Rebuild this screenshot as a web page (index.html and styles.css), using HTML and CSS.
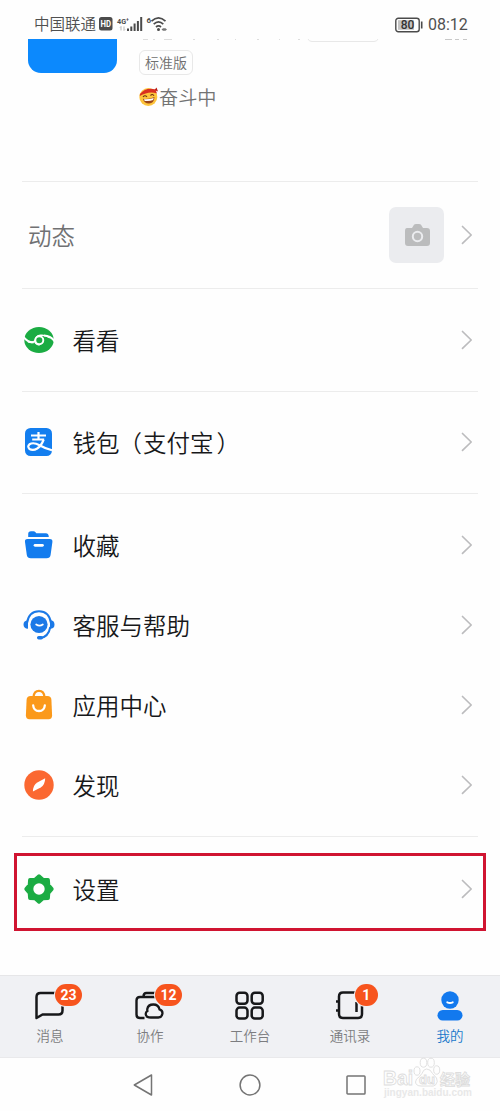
FILE: index.html
```html
<!DOCTYPE html>
<html lang="zh-CN">
<head>
<meta charset="utf-8">
<title>我的</title>
<link rel="stylesheet" href="styles.css">
</head>
<body>
<svg class="defs" width="0" height="0"><symbol id="chevron" viewBox="0 0 12 20"><path d="M1.500 1.500 10.200 10 1.500 18.300" fill="none" stroke="#bcbcbe" stroke-width="1.700" stroke-linecap="round" stroke-linejoin="round"/></symbol></svg>
<header class="status">
  <span class="carrier">中国联通</span>
  <svg class="signals" width="70" height="20" viewBox="0 0 70 20">
    <rect x="0" y="2" width="13.500" height="13.500" rx="2.500" fill="#4b4b4b"/>
    <text x="1.500" y="12" class="hd" textLength="10.500" lengthAdjust="spacingAndGlyphs">HD</text>
    <text x="18" y="8.500" class="net" textLength="12" lengthAdjust="spacingAndGlyphs">4G⁺</text>
    <path d="M22 11.500v4m-1-3 1-1m3 0v4m1-1-1 1" stroke="#aaa" stroke-width=".8" fill="none"/>
    <path d="M29 13.500v2.500M32.300 11.500v4.500M35.600 8.500v7.500M38.900 6v10M42.200 2v14" stroke="#4b4b4b" stroke-width="2"/>
    <text x="47.500" y="8" class="net">6</text>
    <path d="M52.500 6.200q7-6.500 14 0M54.700 9.200q4.800-4.500 9.600 0M57 12q2.500-2.300 5 0" fill="none" stroke="#4b4b4b" stroke-width="1.700"/>
    <circle cx="59.500" cy="14.500" r="1.500" fill="#4b4b4b"/><path d="m62.500 14.500 1.500-1.200h2.500l1.500 1.200-1.500 1.200H64z" fill="#777"/>
  </svg>
  <svg class="battery" width="28" height="16" viewBox="0 0 28 16"><rect x=".8" y="1.200" width="23.400" height="13.600" rx="2.500" fill="none" stroke="#4b4b4b" stroke-width="1.400"/><rect x="3" y="3.200" width="16" height="9.600" fill="#c4c4c4"/><path d="M26.700 4.500v7" stroke="#4b4b4b" stroke-width="1.600"/><text x="5.700" y="12.200" class="level">80</text></svg>
  <span class="time">08:12</span>
</header>

<section class="profile">
  <div class="avatar"></div>
  <div class="about">
    <div class="clipped">
      <svg width="330" height="5" viewBox="0 0 330 5"><path d="M4 .5h5m5 0h2m9 0h8m21 0h2m22 0h2m16 0h1m21 0h2m20 0h1m18 0h2" stroke="#ddd"/><path d="M169 0q1 2.500 4 2.500h62q3 0 4-2.500" fill="none" stroke="#e8e8e8"/><path d="M306 .5h7m3 0h4m4 0h4" stroke="#c8c8c8"/></svg>
    </div>
    <span class="edition">标准版</span>
    <div class="mood">
      <svg width="20" height="20" viewBox="0 0 20 20"><circle cx="9.300" cy="10" r="9" fill="#fdc43c"/><path d="M1 7Q7 0 16.500 2.500L18 6.500Q10 3.500 .8 9z" fill="#d92f20"/><path d="m15.500 3 2-2.500 1.500 4z" fill="#b91d16"/><path d="M4 10q2-2.500 4 0m3.500-1.500q2-2 3.500.3" fill="none" stroke="#6b3012" stroke-width="1.100"/><path d="M4 11.700q6 .8 11.500-1.700Q15 16.500 10 16.500T4 11.700z" fill="#9c4517"/><path d="M5 12.200q5 .4 9.700-1.300l-.6 2.200q-4 1.500-8.400.8z" fill="#fff"/></svg>
      <span>奋斗中</span>
    </div>
  </div>
</section>

<main class="menu">
  <section class="group moments"><div class="row">
    <span class="label muted">动态</span>
    <span class="camera"><svg width="26" height="24" viewBox="0 0 26 24"><path fill="#bbbcbd" d="M3 5h5l2-3.200Q10.600 1 12 1h3q1.400 0 2 .8L19 5h4q3 0 3 3v12q0 3-3 3H4q-3 0-3-3V8q0-3 2-3z"/><circle cx="13.500" cy="13.500" r="4.700" fill="#bbbcbd" stroke="#ebecef" stroke-width="2"/></svg></span>
    <svg class="chevron"><use href="#chevron"/></svg>
  </div></section>

  <section class="group"><div class="row">
    <svg class="icon" viewBox="0 0 32 32"><ellipse cx="16" cy="16" rx="14.700" ry="13" fill="#1bac43"/><path d="M.2 12.500Q4 18.200 10.500 18.300M31.800 17.500Q28 11.700 21 11.500" fill="none" stroke="#fff" stroke-width="2.200"/><path d="M5 17.800Q10 19.700 12.200 16.500 13 11.800 17.500 11.300 23 10.800 27 13.800M12 17.500Q13 20.700 16.500 20.800" fill="none" stroke="#fff" stroke-width="1.700"/><circle cx="16.300" cy="16.200" r="4" fill="#1bac43" stroke="#fff" stroke-width="1.900"/></svg>
    <span class="label">看看</span><svg class="chevron"><use href="#chevron"/></svg>
  </div></section>

  <section class="group"><div class="row">
    <svg class="icon" viewBox="0 0 32 32"><rect x="2" y="2" width="27" height="28" rx="5.500" fill="#137eef"/><path d="M8 9.500h15M9.200 13.500h12M15.500 6v7.500M20.700 13.500Q18.500 19.500 14.200 22.500 10 25 6.500 23 4 20.500 6.500 18.300 10.500 15.800 16.500 19.300 22 22.500 29 24.300" fill="none" stroke="#fff" stroke-width="2.200"/></svg>
    <span class="label">钱包<span class="paren">（</span>支付宝<span class="paren">）</span></span><svg class="chevron"><use href="#chevron"/></svg>
  </div></section>

  <section class="group four">
    <div class="row"><svg class="icon" viewBox="0 0 32 32"><path fill="#137cee" d="M5.200 8V5Q5.200 2.200 8 2.200h2.500q1.200 0 2 1l.8 1h9.500Q25.800 4.200 25.800 8zM4.500 10h22.300q3 0 2.600 3l-1.800 13q-.6 3.300-4 3.300H7.800q-3.400 0-4-3.300L2 13q-.5-3 2.500-3z"/><path d="M12 16.300h7.500" stroke="#fff" stroke-width="2.700" stroke-linecap="round"/></svg><span class="label">收藏</span><svg class="chevron"><use href="#chevron"/></svg></div>
    <div class="row"><svg class="icon" viewBox="0 0 32 32"><circle cx="16" cy="15.500" r="8.600" fill="#1b79e7"/><path d="M4 17.500V14q1.800-11.700 12-11.700T28 14v3.500" fill="none" stroke="#1b79e7" stroke-width="2"/><path d="M5 11.200v8.600Q.5 19.500.5 15.500t4.500-4.300zm22 0q4.500 0 4.500 4.300T27 19.800z" fill="#1b79e7"/><path d="M27.300 18q-1.700 10-10.500 11.300" fill="none" stroke="#1b79e7" stroke-width="2"/><rect x="14" y="26.900" width="6" height="3.500" rx="1.700" fill="#1b79e7"/><path d="M13.200 15.500q3.300 2.300 6.600 0" stroke="#fff" stroke-width="1.800" fill="none" stroke-linecap="round"/></svg><span class="label">客服与帮助</span><svg class="chevron"><use href="#chevron"/></svg></div>
    <div class="row"><svg class="icon" viewBox="0 0 32 32"><path d="M10.500 8Q11 1.800 16 1.800T21.500 8" fill="none" stroke="#fb991a" stroke-width="2.200"/><path d="M7.500 7h17q3.600 0 3.900 3.700l.7 15.500q0 4-3.500 4H6.400q-3.500 0-3.500-4l.7-15.500Q3.900 7 7.500 7z" fill="#fb991a"/><path d="M10.200 16.500Q10.700 22 16 22t5.800-5.500" fill="none" stroke="#fff" stroke-width="2.300" stroke-linecap="round"/></svg><span class="label">应用中心</span><svg class="chevron"><use href="#chevron"/></svg></div>
    <div class="row"><svg class="icon" viewBox="0 0 32 32"><circle cx="16" cy="16" r="14.700" fill="#fb6831"/><path d="M22.200 9.300q-.2 6.700-4.500 9.200L9.900 22.600Q10 16 14.300 13.500z" fill="#fff"/></svg><span class="label">发现</span><svg class="chevron"><use href="#chevron"/></svg></div>
  </section>

  <section class="group settings"><div class="row highlight">
    <svg class="icon" viewBox="0 0 32 32"><path d="m16 3.200 3.900 3.400 5.100.4.400 5.100 3.400 3.900-3.400 3.900-.4 5.100-5.100.4-3.900 3.400-3.900-3.400-5.100-.4-.4-5.100L3.200 16l3.400-3.900L7 7l5.100-.4z" fill="#1bac43" stroke="#1bac43" stroke-width="3.800" stroke-linejoin="round"/><circle cx="16" cy="16" r="5.700" fill="#fff"/></svg>
    <span class="label">设置</span><svg class="chevron"><use href="#chevron"/></svg>
  </div></section>
</main>

<nav class="tabs">
  <a class="tab"><span class="glyph"><svg width="32" height="32" viewBox="0 0 32 32"><path d="M28.500 14v6.500q0 4-4 4H8.500L2.500 28V7q0-4 4-4H21" fill="none" stroke="#17181a" stroke-width="2.500" stroke-linejoin="round"/></svg><b class="badge">23</b></span>消息</a>
  <a class="tab"><span class="glyph"><svg width="32" height="32" viewBox="0 0 32 32"><path d="M10.500 28H6q-3.500 0-3.500-3.500V10.500Q2.500 7 6 7h17M9.500 6.500q0-3.500 3-3.500h9" fill="none" stroke="#17181a" stroke-width="2.400"/><path d="M16.800 27.500h7.500a4.200 4.200 0 0 0 1.200-8.200Q24.500 14.500 19.300 14.500t-6 4.500q-.1 1 .1 2-1.700 1-1.700 3 0 3.500 5.100 3.500z" fill="none" stroke="#17181a" stroke-width="2.300"/></svg><b class="badge">12</b></span>协作</a>
  <a class="tab"><span class="glyph"><svg width="32" height="32" viewBox="0 0 32 32"><g fill="none" stroke="#17181a" stroke-width="2.500"><rect x="2.500" y="2.800" width="11" height="11" rx="3.200"/><rect x="17.700" y="2.800" width="11" height="11" rx="3.200"/><rect x="2.500" y="17.600" width="11" height="11" rx="3.200"/><rect x="17.700" y="17.600" width="11" height="11" rx="3.200"/></g></svg></span>工作台</a>
  <a class="tab"><span class="glyph"><svg width="32" height="32" viewBox="0 0 32 32"><path d="M28 15v9q0 4-4 4H9q-4 0-4-4V6.500q0-4 4-4h13M22.500 12v10M2 11.500h4M2 20.500h4" fill="none" stroke="#17181a" stroke-width="2.500"/></svg><b class="badge single">1</b></span>通讯录</a>
  <a class="tab active"><span class="glyph"><svg width="32" height="32" viewBox="0 0 32 32"><circle cx="16" cy="10" r="8.700" fill="#1279ee"/><rect x="3.500" y="20" width="25" height="10.500" rx="5.200" fill="#1279ee"/><path d="M13.300 12.300q2.700 1.300 5.400 0" fill="none" stroke="#fff" stroke-width="2" stroke-linecap="round"/></svg></span>我的</a>
</nav>

<footer class="system">
  <svg width="20" height="24" viewBox="0 0 20 24"><path d="M18.500 2v20L1.300 12z" fill="none" stroke="#747474" stroke-width="1.500" stroke-linejoin="round"/></svg>
  <svg width="22" height="22" viewBox="0 0 22 22"><circle cx="11" cy="11" r="9.900" fill="none" stroke="#747474" stroke-width="1.500"/></svg>
  <svg width="20" height="20" viewBox="0 0 20 20"><rect x="1" y="1" width="18" height="18" rx=".8" fill="none" stroke="#747474" stroke-width="1.500"/></svg>
</footer>

<svg class="watermark" width="100" height="50" viewBox="0 0 100 50">
  <g fill="#fff" stroke="#d8d8d8" stroke-width=".9">
    <ellipse cx="36" cy="16" rx="3" ry="4.200"/><ellipse cx="42.500" cy="7.700" rx="3.300" ry="4.500"/><ellipse cx="50" cy="7.700" rx="3.300" ry="4.500"/><ellipse cx="55.700" cy="15" rx="3" ry="4.200"/>
    <path d="M45.500 14q4 0 6 4.500l4 4.500q2 4-1 7-2 1.500-5 1H40q-5 0-5.500-4 0-3 4-5.500l2.500-3q1.500-4.500 4.500-4.500z"/>
    <text x="2" y="30" class="bai" textLength="30" lengthAdjust="spacingAndGlyphs">Bai</text>
    <text x="38" y="29" class="du">du</text>
    <text x="59" y="29.500" class="jing" textLength="30">经验</text>
    <text x="3" y="41" class="url" textLength="88">jingyan.baidu.com</text>
  </g>
</svg>
</body>
</html>
```
FILE: styles.css
```css
* { box-sizing: border-box; }
body {
  position: relative;
  margin: 0;
  width: 500px;
  height: 1111px;
  overflow: hidden;
  display: flex;
  flex-direction: column;
  background: #fefefe;
  color: #17181a;
  font-family: Roboto, "Noto Sans CJK SC", sans-serif;
}
svg { display: block; flex: none; }
.defs { position: absolute; }
.status {
  height: 39px;
  flex: none;
  display: flex;
  align-items: center;
  padding: 10px 33px 0 34px;
  color: #505050;
}
.carrier { font-size: 15.500px; font-weight: 350; line-height: 28px; padding-top: 1px; width: 65px; white-space: nowrap; }
.signals { overflow: visible; }
.hd { font: bold 8.500px Roboto, sans-serif; fill: #fff; }
.net { font: bold 8px Roboto, sans-serif; fill: #4b4b4b; }
.level { font: 500 12px Roboto, sans-serif; fill: #333; }
.battery { margin-left: auto; }
.time { font-size: 16px; margin-left: 5px; width: 39px; line-height: 28px; white-space: nowrap; }
.battery, .time { position: relative; }
.profile { height: 142px; flex: none; display: flex; padding-left: 28px; }
.avatar { width: 89px; height: 34px; border-radius: 0 0 13px 13px; background: #0c89fd; }
.about { margin-left: 22px; display: flex; flex-direction: column; align-items: flex-start; }
.clipped { height: 11px; }
.edition {
  width: 54px;
  height: 25px;
  border: 1px solid #e8e8e8;
  border-radius: 6px;
  text-align: center;
  font-size: 14px;
  font-weight: 350;
  line-height: 25px;
  color: #707070;
}
.mood { display: flex; align-items: center; margin-top: 8px; height: 28px; font-size: 19.200px; font-weight: 350; color: #737373; }
.menu { height: 794px; flex: none; padding: 0 22px; }
.group { border-top: 1px solid #ececec; height: 102.500px; display: flex; flex-direction: column; justify-content: center; }
.moments { height: 107px; }
.four { height: 343px; }
.row { display: flex; align-items: center; height: 80px; padding: 0 5px 0 1px; }
.icon { width: 32px; height: 32px; margin-right: 17.500px; }
.label { font-size: 23.500px; font-weight: 350; line-height: 34px; padding-top: 4px; white-space: nowrap; }
.paren { display: inline-block; transform: translateX(3px); }
.paren:first-child { transform: translateX(-1px); }
.muted { color: #707173; margin-left: 5px; }
.camera { width: 55px; height: 56px; border-radius: 7px; background: #ebecef; display: flex; align-items: center; justify-content: center; margin-left: auto; margin-right: 17px; }
.chevron { width: 12px; height: 20px; margin-left: auto; }
.camera + .chevron { margin-left: 0; }
.settings { height: 95px; padding-top: 16px; justify-content: flex-start; }
.highlight { height: 78px; margin: 0 -8px; padding: 0 10px 6px 6px; border: 3px solid #d01431; }
.tabs { height: 83px; flex: none; display: flex; background: #f0f1f4; border-top: 1px solid #e6e6e8; border-bottom: 1px solid #e9e9eb; }
.tab { flex: 1; display: flex; flex-direction: column; align-items: center; padding-top: 14px; color: #7c7d80; font-size: 13.500px; font-weight: 350; line-height: 22px; }
.glyph { position: relative; height: 35px; }
.badge { position: absolute; left: 21px; top: -6.500px; width: 27px; height: 22.500px; border-radius: 12px; background: #f7541d; box-shadow: 0 0 0 1px #f0f1f4; color: #fff; text-align: center; font: 700 14px/23px Roboto, sans-serif; }
.single { width: 22.500px; }
.active { color: #1a78cb; }
.system { height: 53px; flex: none; display: flex; align-items: center; padding-left: 133px; gap: 85px; }
.system svg:nth-child(2) { margin-left: 1px; }
.watermark { position: absolute; left: 381px; top: 1055px; opacity: .85; }
.bai { font: bold 21px "Liberation Sans", sans-serif; }
.du { font: bold 13px "Liberation Sans", sans-serif; }
.jing { font: bold 15px "Noto Sans CJK SC", sans-serif; }
.url { font: bold 10px "Liberation Sans", sans-serif; fill: #e5e5e5; stroke: none; }
```
